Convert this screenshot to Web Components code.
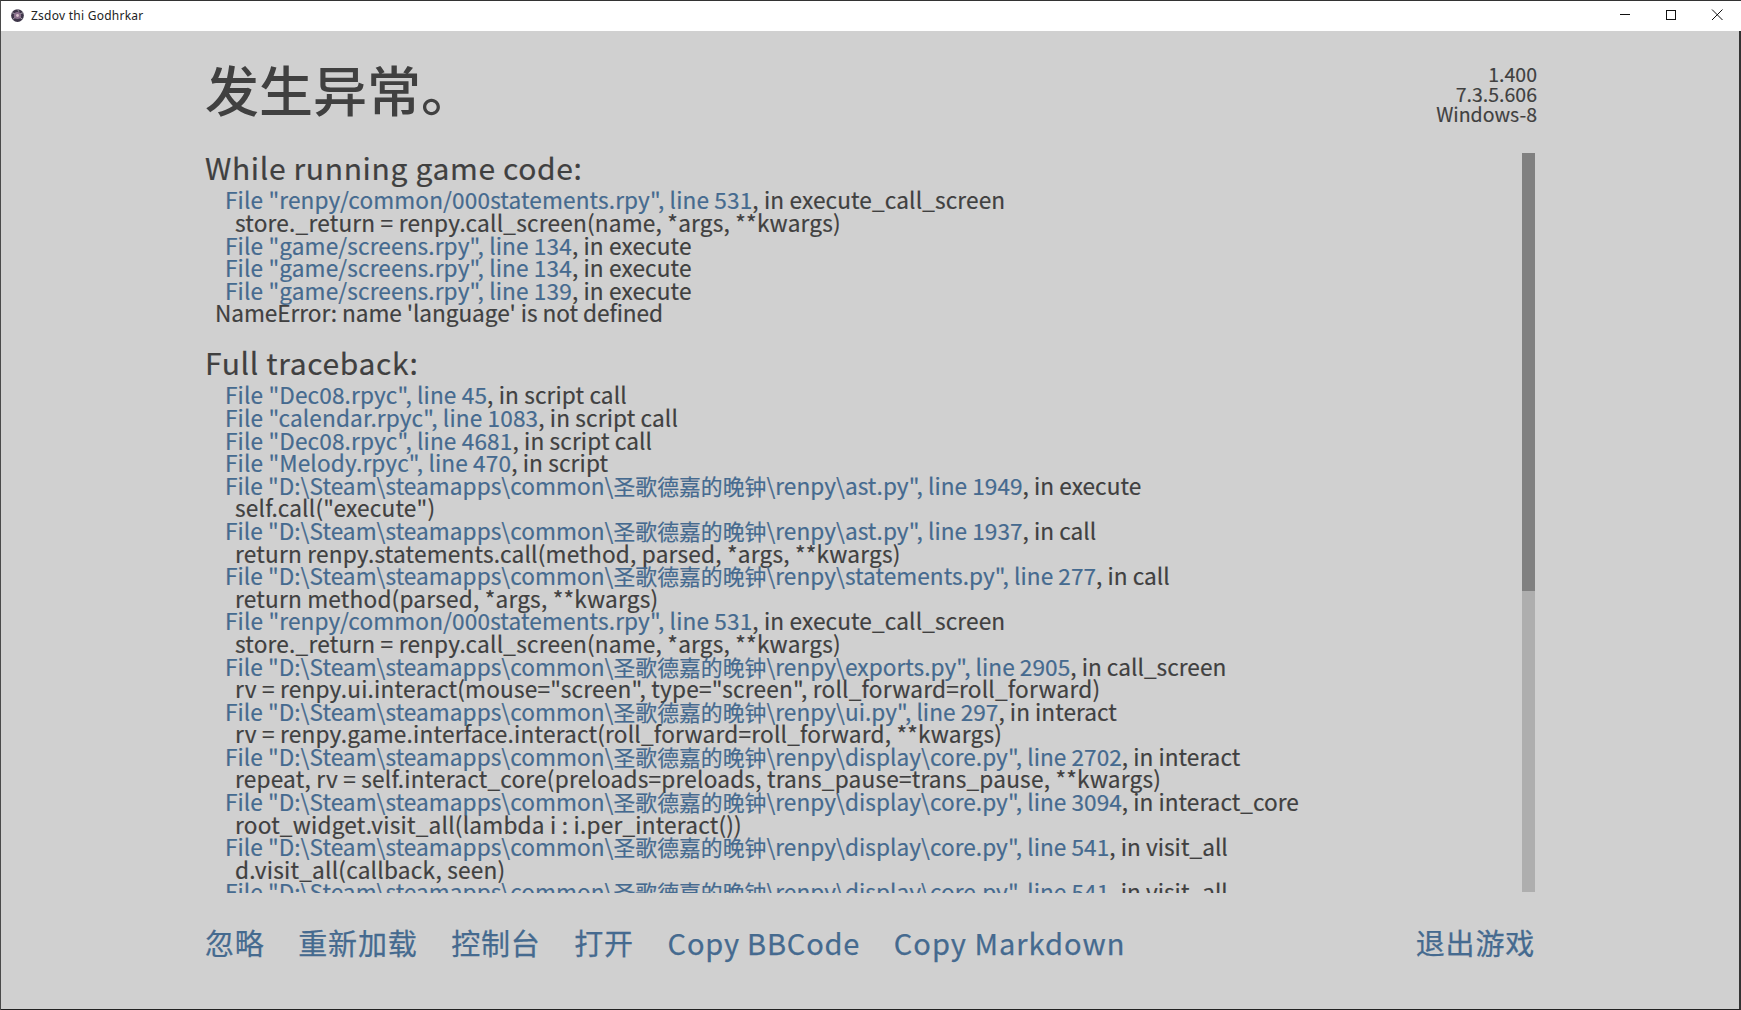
<!DOCTYPE html>
<html><head><meta charset="utf-8">
<style>
html,body{margin:0;padding:0;height:100%;overflow:hidden;background:#d0d0d0}
body{font-family:"Noto Sans CJK SC","Noto Sans",sans-serif}
</style></head><body>
<app-window>
  <title-bar slot="bar">Zsdov thi Godhrkar</title-bar>
  <error-header slot="head" title-text="发生异常。">
    <span>1.400</span><span>7.3.5.606</span><span>Windows-8</span>
  </error-header>
  <trace-panel slot="body" id="panel"></trace-panel>
  <action-bar slot="foot">
    <action-link>忽略</action-link><action-link>重新加载</action-link><action-link>控制台</action-link><action-link>打开</action-link><action-link>Copy BBCode</action-link><action-link style="--ls:1px">Copy Markdown</action-link>
    <action-link slot="end">退出游戏</action-link>
  </action-bar>
</app-window>
<script>
function def(name, css, html, extra){
  customElements.define(name, class extends HTMLElement{
    constructor(){super();const r=this.attachShadow({mode:'open'});r.innerHTML='<style>'+css+'</style>'+html;}
    connectedCallback(){ if(extra) extra(this); }
  });
}
def('app-window',`:host{display:flex;flex-direction:column;width:1741px;height:1010px;box-sizing:border-box;border-top:1px solid #333;border-left:1px solid #4a4a4a;background:#d0d0d0;color:#404040;overflow:hidden}
.m{flex:1;display:flex;flex-direction:column;padding:0 0 0 204px;min-height:0;border-right:2px solid #333;border-bottom:1px solid #222}`,
`<slot name="bar"></slot><div class="m"><slot name="head"></slot><slot name="body"></slot><slot name="foot"></slot></div>`);
def('title-bar',`:host{display:flex;align-items:center;height:30px;background:#fff;flex:none;font:12px/1 "Noto Sans","Noto Sans CJK SC",sans-serif;color:#222;letter-spacing:.25px;padding-right:1px}
svg.i{margin:0 6px 2px 9px;flex:none}.t{flex:1}.b{width:46px;height:30px;box-sizing:border-box;padding-bottom:2px;display:flex;align-items:center;justify-content:center}`,
`<svg class="i" width="15" height="15" viewBox="0 0 16 16"><circle cx="8" cy="8" r="6.8" fill="#3d3548"/><circle cx="8" cy="8" r="3.8" fill="#8a6f8c"/><circle cx="8" cy="8" r="1.5" fill="#d8c4cc"/><path d="M8 1.5 9.5 4M14 5l-3 1M13.5 12l-3-2M3 12l2.5-2M2 5l3 1" stroke="#a9a0ad" stroke-width="1" fill="none"/></svg>
<span class="t"><slot></slot></span>
<span class="b"><svg width="10" height="10" viewBox="0 0 10 10"><path d="M0 4.5H10" stroke="#111" fill="none"/></svg></span>
<span class="b"><svg width="10" height="10" viewBox="0 0 10 10"><rect x=".5" y=".5" width="9" height="9" stroke="#111" fill="none"/></svg></span>
<span class="b"><svg width="12" height="12" viewBox="0 0 12 12"><path d="M1 .5 11.5 11M11.5 .5 1 11" stroke="#111" fill="none"/></svg></span>`);
def('error-header',`:host{display:flex;justify-content:space-between;flex:none;height:115px;padding-right:202px;box-sizing:border-box}
h1{margin:0;padding-top:23px;font:500 54px/70px "Noto Sans CJK SC",sans-serif;color:#404040}
.v{display:flex;flex-direction:column;align-items:flex-end;padding-top:33px}
::slotted(span){font-size:19.5px;line-height:20px;color:#404040;-webkit-text-stroke:.15px #404040}`,
`<h1></h1><div class="v"><slot></slot></div>`,el=>{el.shadowRoot.querySelector('h1').textContent=el.getAttribute('title-text')});
def('trace-section',`:host{display:block;margin-bottom:16px}
h2{margin:-1px 0 0;font:400 30px/44.4px "Noto Sans CJK SC",sans-serif;letter-spacing:.65px;color:#404040;-webkit-text-stroke:.2px #404040}`,
`<h2></h2><slot></slot>`,el=>{el.shadowRoot.querySelector('h2').textContent=el.getAttribute('heading')});
def('trace-line',`:host{display:block;font-size:22.6px;line-height:22.6px;white-space:pre;color:#404040;-webkit-text-stroke:.2px currentColor}
:host([k=f]){padding-left:20px;letter-spacing:.05px}:host([k=p]){padding-left:20px;letter-spacing:.14px}:host([k=c]){padding-left:30px;letter-spacing:.22px}:host([k=e]){padding-left:10px;letter-spacing:-.05px}
b{font-weight:400;color:#456a8f}i{font-style:normal;font-size:21.8px}`,`<b></b><span></span>`,el=>{
  const t=el.textContent;const r=el.shadowRoot;const k=el.getAttribute('k');
  if(k==='f'||k==='p'){
    const i=t.lastIndexOf(', in ');const b=r.querySelector('b');
    const parts=t.slice(0,i).split(/([\u4e00-\u9fff]+)/);
    parts.forEach((p,n)=>{ if(n%2){const c=document.createElement('i');c.textContent=p;b.appendChild(c);} else b.appendChild(document.createTextNode(p)); });
    r.querySelector('span').textContent=t.slice(i);
  } else r.querySelector('span').textContent=t;
});
def('trace-panel',`:host{display:flex;flex:none;height:747px;padding-right:204px}
.s{flex:1;overflow:hidden;height:747px}
.bar{width:13px;margin-top:7px;height:739px;background:#aeaeae;flex:none}.th{height:438px;background:#808080}`,
`<div class="s"><slot></slot></div><div class="bar"><div class="th"></div></div>`);
def('action-bar',`:host{display:flex;flex:none;align-items:center;justify-content:space-between;padding:28px 204px 0 0}
.l{display:flex;gap:33.7px}`,`<div class="l"><slot></slot></div><slot name="end"></slot>`);
def('action-link',`:host{display:block;font-size:29px;line-height:42px;letter-spacing:var(--ls,.8px);color:#456a8f;-webkit-text-stroke:.25px #456a8f}`,`<slot></slot>`);

const D='File "D:\\Steam\\steamapps\\common\\圣歌德嘉的晚钟\\renpy\\';
const data=[['While running game code:',[
['p','File "renpy/common/000statements.rpy", line 531, in execute_call_screen'],
['c','store._return = renpy.call_screen(name, *args, **kwargs)'],
['p','File "game/screens.rpy", line 134, in execute'],
['p','File "game/screens.rpy", line 134, in execute'],
['p','File "game/screens.rpy", line 139, in execute'],
['e',"NameError: name 'language' is not defined"]]],
['Full traceback:',[
['p','File "Dec08.rpyc", line 45, in script call'],
['p','File "calendar.rpyc", line 1083, in script call'],
['p','File "Dec08.rpyc", line 4681, in script call'],
['p','File "Melody.rpyc", line 470, in script'],
['f',D+'ast.py", line 1949, in execute'],
['c','self.call("execute")'],
['f',D+'ast.py", line 1937, in call'],
['c','return renpy.statements.call(method, parsed, *args, **kwargs)'],
['f',D+'statements.py", line 277, in call'],
['c','return method(parsed, *args, **kwargs)'],
['p','File "renpy/common/000statements.rpy", line 531, in execute_call_screen'],
['c','store._return = renpy.call_screen(name, *args, **kwargs)'],
['f',D+'exports.py", line 2905, in call_screen'],
['c','rv = renpy.ui.interact(mouse="screen", type="screen", roll_forward=roll_forward)'],
['f',D+'ui.py", line 297, in interact'],
['c','rv = renpy.game.interface.interact(roll_forward=roll_forward, **kwargs)'],
['f',D+'display\\core.py", line 2702, in interact'],
['c','repeat, rv = self.interact_core(preloads=preloads, trans_pause=trans_pause, **kwargs)'],
['f',D+'display\\core.py", line 3094, in interact_core'],
['c','root_widget.visit_all(lambda i : i.per_interact())'],
['f',D+'display\\core.py", line 541, in visit_all'],
['c','d.visit_all(callback, seen)'],
['f',D+'display\\core.py", line 541, in visit_all']]]];
const panel=document.getElementById('panel');
for(const [h,ls] of data){
  const s=document.createElement('trace-section');s.setAttribute('heading',h);
  for(const [k,t] of ls){const l=document.createElement('trace-line');l.setAttribute('k',k);l.textContent=t;s.appendChild(l);}
  panel.appendChild(s);
}
</script>
</body></html>
